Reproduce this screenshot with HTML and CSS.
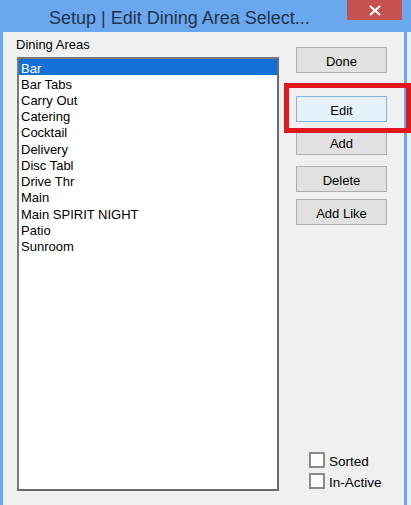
FILE: index.html
```html
<!DOCTYPE html>
<html>
<head>
<meta charset="utf-8">
<title>Setup | Edit Dining Area Select...</title>
<link rel="stylesheet" href="styles.css">
</head>
<body>
<div class="screen">
  <div class="window">
    <div class="titlebar">
      <span class="title">Setup | Edit Dining Area Select...</span>
      <div class="close">
        <svg width="12" height="11" viewBox="0 0 12 11"><path d="M1 1 L11 10 M11 1 L1 10" stroke="#fff" stroke-width="2.2" fill="none"/></svg>
      </div>
    </div>
    <div class="client">
      <div class="left">
        <div class="label">Dining Areas</div>
        <ul class="list">
          <li class="selected">Bar</li>
          <li>Bar Tabs</li>
          <li>Carry Out</li>
          <li>Catering</li>
          <li>Cocktail</li>
          <li>Delivery</li>
          <li>Disc Tabl</li>
          <li>Drive Thr</li>
          <li>Main</li>
          <li>Main SPIRIT NIGHT</li>
          <li>Patio</li>
          <li>Sunroom</li>
        </ul>
      </div>
      <div class="right">
        <button class="btn btn-done">Done</button>
        <button class="btn btn-edit focused">Edit</button>
        <button class="btn btn-add">Add</button>
        <button class="btn btn-delete">Delete</button>
        <button class="btn btn-addlike">Add Like</button>
        <div class="checks">
          <label class="check"><span class="box"></span><span class="text">Sorted</span></label>
          <label class="check"><span class="box"></span><span class="text">In-Active</span></label>
        </div>
      </div>
    </div>
  </div>
  <div class="highlight"></div>
</div>
</body>
</html>
```

FILE: styles.css
```css
* { box-sizing: border-box; }
html, body {
  margin: 0;
  padding: 0;
}
body {
  width: 411px;
  height: 505px;
  overflow: hidden;
  background: #e9eff7;
  font-family: "Liberation Sans", Arial, sans-serif;
  font-size: 13px;
  color: #000;
}
.screen {
  position: relative;
  width: 411px;
  height: 505px;
}
.window {
  display: flex;
  flex-direction: column;
  height: 505px;
}
.titlebar {
  height: 32px;
  background: #6ba7ee;
  display: flex;
  align-items: flex-start;
  flex: none;
}
.title {
  padding-left: 49px;
  padding-top: 5px;
  font-size: 18px;
  line-height: 26px;
  color: #22344c;
  white-space: nowrap;
}
.close {
  margin-left: auto;
  margin-right: 9px;
  width: 55px;
  height: 20px;
  background: #c75050;
  display: flex;
  align-items: center;
  justify-content: center;
}
.client {
  flex: 1;
  display: flex;
  background: #f0f0f0;
  border-left: 3px solid #6ba7ee;
  border-right: 3px solid #6ba7ee;
  width: 407px;
  padding-left: 14px;
}
.left {
  width: 262px;
  padding-top: 5px;
  display: flex;
  flex-direction: column;
}
.label {
  line-height: 15px;
  margin-left: -1px;
}
.list {
  list-style: none;
  margin: 5px 0 0 0;
  padding: 0;
  width: 262px;
  height: 434px;
  background: #fff;
  border: 2px solid #6a6a6a;
  border-top-color: #7a7a7a;
  border-left-color: #7a7a7a;
}
.list li {
  height: 16.23px;
  line-height: 14px;
  padding: 2.6px 0 0 2px;
  white-space: nowrap;
}
.list li.selected {
  background: #1470d8;
  color: #fff;
}
.right {
  width: 91px;
  margin-left: 17px;
  padding-top: 15px;
  display: flex;
  flex-direction: column;
}
.btn {
  display: block;
  width: 91px;
  height: 26px;
  margin: 0;
  padding: 3px 0 0 0;
  line-height: 21px;
  font-family: inherit;
  font-size: 13px;
  color: #000;
  text-align: center;
  background: #e1e1e1;
  border: 1px solid #adadad;
  border-radius: 0;
}
.btn.focused {
  background: #e5f1fb;
  border-color: #7eb4ea;
}
.btn-edit { margin-top: 23px; }
.btn-add { margin-top: 7px; }
.btn-delete { margin-top: 11px; }
.btn-addlike { margin-top: 7px; }
.checks {
  margin-top: auto;
  padding-left: 13px;
  padding-bottom: 16px;
  display: flex;
  flex-direction: column;
  gap: 5px;
}
.check {
  display: flex;
  align-items: flex-start;
  height: 16px;
}
.box {
  width: 16px;
  height: 16px;
  border: 2px solid #8a8a8a;
  background: #fdfdfd;
  flex: none;
}
.text {
  margin-left: 4px;
  padding-top: 2px;
  line-height: 16px;
  font-size: 13.5px;
  white-space: nowrap;
}
.highlight {
  position: absolute;
  left: 284px;
  top: 83px;
  width: 127px;
  height: 50px;
  border: 5px solid #e2171e;
}
```
